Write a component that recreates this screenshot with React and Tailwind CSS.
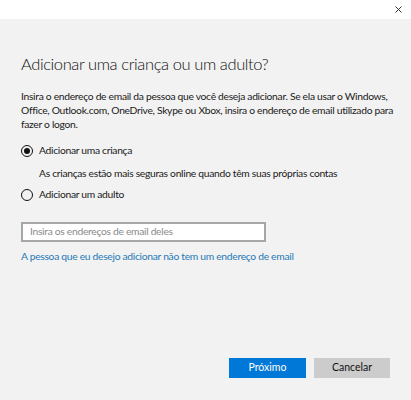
export default function App() {
  const font = { fontFamily: 'Lato, "Noto Sans", sans-serif' };
  return (
    <div className="w-[411px] h-[400px] bg-[#f2f2f2] flex flex-col text-[#1f1f1f]" style={font}>
      <div className="h-[19px] bg-white flex justify-end items-center pr-[9px]">
        <svg width="7" height="7" viewBox="0 0 7 7" className="text-[#333]">
          <path d="M0.5 0.5 L6.5 6.5 M6.5 0.5 L0.5 6.5" stroke="currentColor" strokeWidth="1" />
        </svg>
      </div>
      <div className="flex flex-col px-[21px] pt-[33px] text-[10.3px] tracking-[-0.3px]">
        <h1 className="text-[16.5px] leading-[24px] font-light text-[#111] tracking-[-0.4px]">Adicionar uma criança ou um adulto?</h1>
        <p className="mt-[13px] leading-[14px] text-[#1a1a1a] w-[372px]">
          Insira o endereço de email da pessoa que você deseja adicionar. Se ela usar o Windows, Office, Outlook.com, OneDrive, Skype ou Xbox, insira o endereço de email utilizado para fazer o logon.
        </p>
        <div className="mt-[12px] flex items-center gap-[6px] h-[16px]">
          <span className="w-[12px] h-[12px] rounded-full border-[1.5px] border-[#111] flex items-center justify-center">
            <span className="w-[6px] h-[6px] rounded-full bg-[#111]" />
          </span>
          <span className="text-[#1a1a1a]">Adicionar uma criança</span>
        </div>
        <div className="mt-[6px] pl-[18px] leading-[16px] text-[#1a1a1a]">
          As crianças estão mais seguras online quando têm suas próprias contas
        </div>
        <div className="mt-[6px] flex items-center gap-[6px] h-[16px]">
          <span className="w-[12px] h-[12px] rounded-full border-[1.5px] border-[#111]" />
          <span className="text-[#1a1a1a]">Adicionar um adulto</span>
        </div>
        <div className="mt-[19px] w-[245px] h-[20px] border-2 border-[#a6a6a6] bg-white flex items-center pl-[7px]">
          <span className="text-[#8a8a8a]">Insira os endereços de email deles</span>
        </div>
        <div className="mt-[6px] leading-[16px] text-[#1f7ab8]">
          A pessoa que eu desejo adicionar não tem um endereço de email
        </div>
      </div>
      <div className="mt-auto mb-[22px] flex justify-end gap-[8px] pr-[21px] text-[10.5px]">
        <button className="w-[77px] h-[20px] bg-[#0078d7] text-white flex items-center justify-center">Próximo</button>
        <button className="w-[76px] h-[20px] bg-[#cccccc] text-[#111] flex items-center justify-center">Cancelar</button>
      </div>
    </div>
  );
}
